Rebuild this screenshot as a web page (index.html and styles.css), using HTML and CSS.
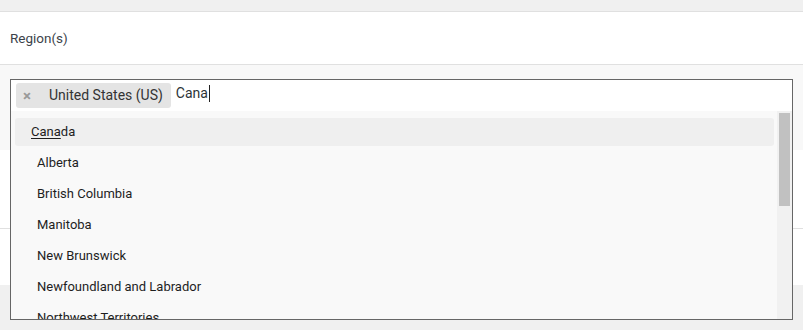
FILE: index.html
```html
<!DOCTYPE html>
<html lang="en">
<head>
<meta charset="utf-8">
<title>Region(s)</title>
<link rel="stylesheet" href="styles.css">
</head>
<body>
  <div class="topbar"></div>
  <div class="field-header">Region(s)</div>
  <div class="field-body">
    <div class="select">
      <div class="selection">
        <span class="tag"><span class="tag-x">×</span><span class="tag-label">United States (US)</span></span>
        <span class="search">Cana<span class="caret"></span></span>
      </div>
      <div class="dropdown">
        <ul class="options">
          <li class="option group highlighted"><u>Cana</u>da</li>
          <li class="option child">Alberta</li>
          <li class="option child">British Columbia</li>
          <li class="option child">Manitoba</li>
          <li class="option child">New Brunswick</li>
          <li class="option child">Newfoundland and Labrador</li>
          <li class="option child">Northwest Territories</li>
        </ul>
        <div class="scrollbar"><div class="thumb"></div></div>
      </div>
    </div>
  </div>
  <div class="section-a"></div>
  <div class="section-b"></div>
  <div class="footer"></div>
</body>
</html>
```

FILE: styles.css
```css
* { box-sizing: border-box; }
html, body { margin: 0; padding: 0; }
body {
  width: 803px;
  height: 330px;
  overflow: hidden;
  background: #f0f0f0;
  font-family: Roboto, "Liberation Sans", sans-serif;
  color: #222;
}
.topbar {
  height: 12px;
  background: #f0f0f0;
  border-bottom: 1px solid #e0e0e0;
}
.field-header {
  height: 53px;
  background: #fff;
  border-bottom: 1px solid #e0e0e0;
  padding-left: 10px;
  display: flex;
  align-items: center;
  font-size: 13.5px;
  color: #3c434a;
}
.field-body {
  background: #f8f8f8;
  height: 85px;
  padding: 14px 10px 0 10px;
}
.select {
  position: relative;
}
.selection {
  height: 32px;
  background: #fff;
  border: 1px solid #666;
  border-bottom: none;
  padding: 3px 5px;
  display: flex;
  align-items: flex-start;
  gap: 5px;
}
.tag {
  height: 25px;
  background: #e4e4e4;
  border-radius: 3px;
  display: flex;
  align-items: center;
  padding: 0 8px 0 7px;
  font-size: 14px;
  color: #333;
}
.tag-x {
  color: #999;
  font-weight: bold;
  font-size: 15px;
  width: 26px;
}
.tag-label { line-height: 25px; }
.search {
  font-size: 14px;
  color: #2c3338;
  line-height: 18px;
  padding-top: 1px;
  display: flex;
  align-items: center;
}
.caret {
  display: inline-block;
  width: 1px;
  height: 17px;
  background: #222;
  margin-left: 1px;
}
.dropdown {
  position: absolute;
  top: 100%;
  left: 0;
  right: 0;
  height: 209px;
  border: 1px solid #666;
  border-top: none;
  background: #f9f9f9;
  display: flex;
  z-index: 5;
}
.options {
  list-style: none;
  margin: 0;
  flex: 1;
  overflow: hidden;
  padding: 7px 3px 0 4px;
}
.option {
  height: 28px;
  line-height: 28px;
  margin-bottom: 3px;
  border-radius: 3px;
  font-size: 13px;
  color: #1e1e1e;
  white-space: nowrap;
}
.option.group { padding-left: 16px; }
.option.child { padding-left: 22px; }
.option.highlighted { background: #efefef; }
.option u { text-decoration-thickness: 1px; text-underline-offset: 2px; }
.scrollbar {
  width: 15px;
  background: #f1f1f1;
  padding: 2px 2px 0 2px;
}
.thumb {
  height: 93px;
  background: #c1c1c1;
}
.section-a {
  height: 79px;
  background: #fff;
  border-bottom: 1px solid #e0e0e0;
}
.section-b {
  height: 56px;
  background: #fff;
}
.footer {
  height: 45px;
  background: #f0f0f0;
}
```
